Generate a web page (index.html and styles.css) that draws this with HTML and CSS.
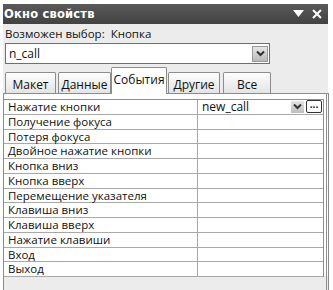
FILE: index.html
```html
<!DOCTYPE html>
<html lang="ru">
<head>
<meta charset="utf-8">
<link rel="stylesheet" href="styles.css">
</head>
<body>
<div class="panel">
  <div class="titlebar">
    <span class="title">Окно свойств</span>
    <span class="tb-icons">
      <svg width="11" height="8" viewBox="0 0 11 8"><polygon points="0,0 11,0 5.5,7" fill="#fff"/></svg>
      <svg width="10" height="10" viewBox="0 0 10 10"><path d="M1 1 L9 9 M9 1 L1 9" stroke="#fff" stroke-width="2"/></svg>
    </span>
  </div>
  <div class="selection">Возможен выбор:&nbsp; Кнопка</div>
  <div class="combo">
    <span class="combo-text">n_call</span>
    <span class="dd-btn"><svg width="9" height="7" viewBox="0 0 9 7"><path d="M1 1.5 L4.5 5 L8 1.5" fill="none" stroke="#333" stroke-width="2"/></svg></span>
  </div>
  <div class="tabs">
    <div class="tab t1">Макет</div>
    <div class="tab t2">Данные</div>
    <div class="tab t3 active">События</div>
    <div class="tab t4">Другие</div>
    <div class="tab t5">Все</div>
  </div>
  <div class="sheet">
    <div class="grid">
      <div class="row"><div class="lab">Нажатие кнопки</div><div class="val first"><span>new_call</span><span class="cell-btns"><span class="dd-small"><svg width="9" height="7" viewBox="0 0 9 7"><path d="M1 1.5 L4.5 5 L8 1.5" fill="none" stroke="#333" stroke-width="2"/></svg></span><span class="dots">...</span></span></div></div>
      <div class="row"><div class="lab">Получение фокуса</div><div class="val"></div></div>
      <div class="row"><div class="lab">Потеря фокуса</div><div class="val"></div></div>
      <div class="row"><div class="lab">Двойное нажатие кнопки</div><div class="val"></div></div>
      <div class="row"><div class="lab">Кнопка вниз</div><div class="val"></div></div>
      <div class="row"><div class="lab">Кнопка вверх</div><div class="val"></div></div>
      <div class="row"><div class="lab">Перемещение указателя</div><div class="val"></div></div>
      <div class="row"><div class="lab">Клавиша вниз</div><div class="val"></div></div>
      <div class="row"><div class="lab">Клавиша вверх</div><div class="val"></div></div>
      <div class="row"><div class="lab">Нажатие клавиши</div><div class="val"></div></div>
      <div class="row"><div class="lab">Вход</div><div class="val"></div></div>
      <div class="row"><div class="lab">Выход</div><div class="val"></div></div>
    </div>
  </div>
</div>
</body>
</html>
```

FILE: styles.css
```css
* { box-sizing: border-box; }
html, body { margin: 0; padding: 0; background: #fff; }
body { width: 333px; height: 290px; overflow: hidden; }

.panel {
  margin: 4px 5px 0 3px;
  height: 286px;
  background: #ececec;
  display: flex;
  flex-direction: column;
  font-family: "Open Sans", "Noto Sans", sans-serif;
  font-size: 11.5px;
  color: #111;
}

.titlebar {
  height: 20px;
  background: linear-gradient(#5a5a5a, #424242);
  display: flex;
  align-items: center;
  justify-content: space-between;
  padding: 0 6px 0 1px;
}
.title {
  color: #fff;
  font-family: "DejaVu Sans", sans-serif;
  font-weight: bold;
  font-size: 11.5px;
  letter-spacing: 0.2px;
}
.tb-icons { display: flex; align-items: center; gap: 8px; }

.selection {
  height: 19px;
  padding: 2px 0 0 2px;
  line-height: 16px;
}

.combo {
  margin: 0 58px 0 2px;
  height: 21px;
  background: #fff;
  border: 1px solid #6f6f6f;
  display: flex;
  align-items: center;
  justify-content: space-between;
  padding: 0 1px 0 3px;
}
.combo-text { font-size: 12px; }
.dd-btn {
  width: 16px;
  height: 16px;
  border: 1px solid #9a9a9a;
  background: linear-gradient(#e6e6e6, #b9b9b9);
  display: flex;
  align-items: center;
  justify-content: center;
}

.tabs {
  display: flex;
  align-items: flex-end;
  gap: 2px;
  margin: 3px 0 0 2px;
  height: 26px;
  position: relative;
  z-index: 1;
}
.tab {
  height: 21px;
  border: 1px solid #8c8c8c;
  border-bottom: none;
  border-radius: 2px 2px 0 0;
  background: linear-gradient(#fdfdfd, #e4e4e4);
  display: flex;
  align-items: center;
  justify-content: center;
  font-size: 12px;
  padding-top: 2px;
}
.t1 { width: 51px; }
.t2 { width: 53px; margin-left: 0; }
.t3 { width: 56px; margin-left: -2px; }
.t4 { width: 52px; margin-left: -1px; }
.t5 { width: 48px; margin-left: 1px; }
.tab.active {
  height: 26px;
  background: #fff;
  padding-top: 0;
  margin-bottom: -1px;
  height: 27px;
  align-items: flex-start;
  padding-top: 3px;
}

.sheet {
  flex: 1;
  margin-right: -1px;
  border: 1px solid #8c8c8c;
  border-bottom: none;
  border-right: 3px double #8c8c8c;
  background: linear-gradient(#fff 0, #fff 182px, #ececec 182px);
  padding: 5px 2px 0 0;
}
.grid {
  border: 1px solid #8f8f8f;
  border-bottom: none;
  border-left: none;
  margin-left: 0;
}
.row {
  display: flex;
  height: 14.75px;
  border-bottom: 1px solid #a8a8a8;
}
.lab {
  width: 194px;
  border-right: 1px solid #a8a8a8;
  padding-left: 4px;
  line-height: 13px;
  white-space: nowrap;
  font-size: 11.5px;
}
.val {
  flex: 1;
  background: #fff;
  padding-left: 4px;
  line-height: 13px;
  display: flex;
  justify-content: space-between;
}
.val.first { font-size: 12px; }
.cell-btns { display: flex; gap: 2px; align-items: center; padding-right: 1px; }
.dd-small {
  width: 13px;
  height: 12px;
  background: linear-gradient(#e6e6e6, #bdbdbd);
  display: flex;
  align-items: center;
  justify-content: center;
}
.dots {
  width: 16px;
  height: 13px;
  border: 1px solid #333;
  border-radius: 2px;
  background: #fff;
  font-size: 10px;
  font-weight: bold;
  line-height: 6px;
  text-align: center;
}
```
